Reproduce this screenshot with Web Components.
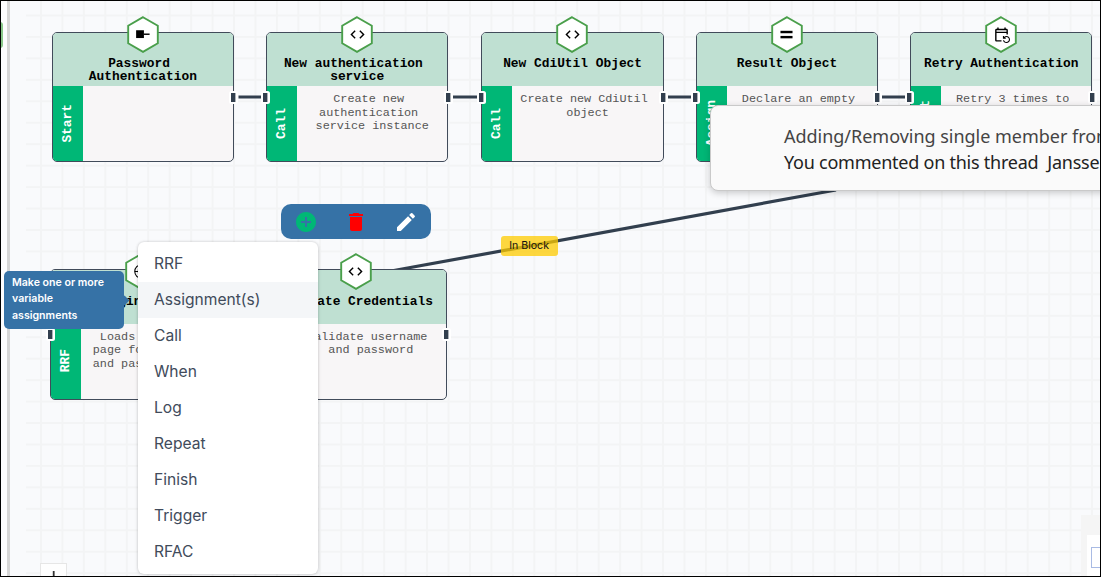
<!DOCTYPE html>
<html lang="en"><head><meta charset="utf-8"><title>Flow editor</title>
<style>
html,body{margin:0;height:100%;overflow:hidden}
body{font-family:Inter,"Liberation Sans",sans-serif}
</style></head><body>
<flow-editor></flow-editor>
<script>
const ICONS={
 start:'<rect x="3" y="6" width="11" height="11"/><rect x="14" y="10.6" width="8" height="2"/>',
 code:'<path d="M9.4 16.6 4.8 12l4.6-4.6L8 6l-6 6 6 6zm5.2 0 4.6-4.6-4.6-4.6L16 6l6 6-6 6z"/>',
 equal:'<rect x="3.5" y="6.8" width="17" height="3.4"/><rect x="3.5" y="14" width="17" height="3.4"/>',
 repeat:'<path fill-rule="evenodd" d="M21 12V6c0-1.1-.9-2-2-2h-1V2h-2v2H8V2H6v2H5c-1.11 0-1.99.9-1.99 2L3 20c0 1.1.89 2 2 2h7v-2H5V10h14v2zM19 8H5V6h14zm-3.36 12c.43 1.45 1.77 2.5 3.36 2.5 1.93 0 3.5-1.57 3.5-3.5s-1.57-3.5-3.5-3.5c-.95 0-1.82.38-2.45 1H18V18h-4v-4h1.5v1.43c.9-.88 2.14-1.43 3.5-1.43 2.76 0 5 2.24 5 5s-2.24 5-5 5c-2.42 0-4.44-1.72-4.9-4z"/>',
 web:'<g fill="none" stroke="#000" stroke-width="1.5"><circle cx="12" cy="12" r="9.5"/><ellipse cx="12" cy="12" rx="4.5" ry="9.5"/><path d="M2.5 12h19"/></g>',
 add:'<path d="M12 2C6.48 2 2 6.48 2 12s4.48 10 10 10 10-4.48 10-10S17.52 2 12 2m5 11h-4v4h-2v-4H7v-2h4V7h2v4h4z"/>',
 trash:'<path d="M6 19c0 1.1.9 2 2 2h8c1.1 0 2-.9 2-2V7H6zM19 4h-3.5l-1-1h-5l-1 1H5v2h14z"/>',
 edit:'<path d="M3 17.25V21h3.75L17.81 9.94l-3.75-3.75zM20.71 7.04c.39-.39.39-1.02 0-1.41l-2.34-2.34a.996.996 0 0 0-1.41 0l-1.83 1.83 3.75 3.75z"/>'
};
const define=(name,render)=>customElements.define(name,class extends HTMLElement{
 connectedCallback(){ if(!this.shadowRoot) this.attachShadow({mode:'open'}).innerHTML=render(this); }
});

define('flow-icon',el=>`<style>:host{display:block;width:var(--size,24px);height:var(--size,24px)}svg{display:block;width:100%;height:100%;fill:currentColor}</style><svg viewBox="0 0 24 24">${ICONS[el.getAttribute('name')]}</svg>`);

define('hex-badge',el=>`<style>:host{display:grid;width:32px;height:37px;place-items:center}
svg,flow-icon{grid-area:1/1}flow-icon{--size:17px;color:#000}</style>
<svg width="32" height="37"><path d="M16 1.2 30.8 9.8V27.2L16 35.8 1.2 27.2V9.8Z" fill="#fff" stroke="#4a9f4b" stroke-width="1.9"/></svg><flow-icon name="${el.getAttribute('icon')}"></flow-icon>`);

define('flow-port',()=>`<style>:host{display:block;width:9px;height:13px}svg{display:block}</style><svg width="9" height="13"><rect width="9" height="13" rx="2.5" fill="#fff"/><rect x="2" y="2" width="4.4" height="9" fill="#323f4e"/></svg>`);

define('flow-node',el=>`<style>
:host{display:block;width:182.4px;height:130.5px;font-family:"Liberation Mono",monospace}
.card{box-sizing:border-box;width:100%;height:100%;border:1px solid #414b5a;border-radius:5px;overflow:hidden;display:grid;grid-template:53.5px 1fr/30px 1fr;background:#f8f6f7}
header{grid-column:1/3;background:#bfe0d2;display:flex;flex-direction:column;align-items:center;padding-top:24.6px;box-sizing:border-box;font:bold 12.87px/13px "Liberation Mono",monospace;color:#000;white-space:pre}
.kind{background:#00b776;color:#fff;display:flex;align-items:center;justify-content:center;padding-bottom:1.5px;font:bold 12.87px/14px "Liberation Mono",monospace}
.kind span{writing-mode:vertical-rl;transform:rotate(180deg)}
.text{padding-top:6.7px;text-align:center;font-size:11.8px;line-height:13.7px;color:#555;white-space:pre}
hex-badge{position:absolute;top:-16px;left:75px}
flow-port{position:absolute;top:59px}
.in{left:-4.8px}.out{right:-4.2px}
</style><div class="card"><header><slot name="title"></slot></header><div class="kind"><span>${el.getAttribute('kind')}</span></div><div class="text"><slot></slot></div></div>
<hex-badge icon="${el.getAttribute('icon')}"></hex-badge>${el.hasAttribute('first')?'':'<flow-port class="in"></flow-port>'}<flow-port class="out"></flow-port>`);

define('action-bar',()=>`<style>:host{display:flex;width:150px;height:35px;align-items:center;justify-content:space-around;background:#3672a6;border-radius:10px}
.a{color:#00b776}.t{color:red}.e{color:#fff}</style><flow-icon class="a" name="add"></flow-icon><flow-icon class="t" name="trash"></flow-icon><flow-icon class="e" name="edit"></flow-icon>`);

define('menu-item',el=>`<style>:host{display:flex;align-items:center;height:36px;padding:0 16px;font:400 15.6px/24px Inter,sans-serif;color:#414b5b}:host([active]){background:#f4f6f8}</style><slot></slot>`);
define('add-menu',()=>`<style>:host{display:block;box-sizing:border-box;width:180px;height:332.5px;padding-top:4px;background:#fff;border-radius:6px;box-shadow:0 0 3px #0003,0 2px 5px #0001}</style><slot></slot>`);

define('hint-tip',()=>`<style>:host{display:block;box-sizing:border-box;width:120px;height:58px;padding:3.8px 8px;background:#3672a6;border-radius:5px;color:#fff;font:600 10.6px/16.5px Inter,sans-serif;white-space:pre}
i{position:absolute;right:-3.5px;top:25.5px;width:7px;height:7px;background:#3672a6;transform:rotate(45deg)}</style><slot></slot><i></i>`);

define('thread-toast',()=>`<style>:host{display:flex;flex-direction:column;box-sizing:border-box;width:420px;height:86px;padding:17px 0 0 73px;background:#fafafa;border:1px solid #c9c9c9;border-radius:8px;box-shadow:0 2px 7px #0003;font:400 18px/26px "Noto Sans",sans-serif;color:#222;white-space:pre}
::slotted(*){letter-spacing:-.24px}::slotted([slot=head]){color:#444;letter-spacing:-.02px}</style><slot name="head"></slot><slot></slot>`);

define('edge-label',()=>`<style>:host{display:flex;align-items:center;justify-content:center;width:57px;height:20px;border-radius:3px;background:#fecb00bf;color:#111;font:400 10.6px/20px Inter,sans-serif}</style><slot></slot>`);

define('zoom-controls',()=>`<style>:host{display:block;box-sizing:border-box;width:27px;height:27px;background:#fefefe;border:1px solid #e6e6e6}svg{display:block}</style><svg width="25" height="25"><path d="M12.7 7V19M6.5 13H18.5" stroke="#333" stroke-width="1.8"/></svg>`);
define('mini-map',()=>`<style>:host{display:block;width:100px;height:100px;background:#f5f5f5;padding:20px 0 0 6px;box-sizing:border-box}div{background:#fff;height:80px;padding:12px 0 0 4px;box-sizing:border-box}i{display:block;box-sizing:border-box;width:30px;height:21px;border:1px solid #a9bbe4}</style><div><i></i></div>`);

define('flow-editor',()=>`<style>
:host{display:block;position:relative;width:1101px;height:577px;overflow:hidden;background:#f9fafc}
.rail{display:flow-root;box-sizing:border-box;width:10px;height:577px;background:#fdfdfe;border-right:3px solid #d6d6d6}
.rail i{display:block;width:3px;height:26px;margin-top:22px;background:#8bc98b;border-radius:0 3px 3px 0}
.grid,.edges{position:absolute;inset:0}
.frame{position:absolute;inset:0;border:1px solid #000}
.at{position:absolute;left:var(--x);top:var(--y)}
</style>
<div class="rail"><i></i></div>
<svg class="grid" width="1101" height="577"><defs><pattern id="g" x="40" y="14.5" width="21.45" height="21.45" patternUnits="userSpaceOnUse"><path d="M0 1H21.45M1 0V21.45" fill="none" stroke="#f3f4f5" stroke-width="1.9"/></pattern></defs><rect x="26" width="1075" height="577" fill="url(#g)"/></svg>
<svg class="edges" width="1101" height="577"><path d="M238.5 97.1H262M453 97.1H477M668 97.1H692M882 97.1H906" stroke="#323f4e" stroke-width="3"/><path d="M376 273.8 836 190" stroke="#323f4e" stroke-width="3.2"/></svg>
<flow-node class="at" style="--x:51.7px;--y:31.8px" kind="Start" icon="start" first><span slot="title">Password </span><span slot="title">Authentication</span></flow-node>
<flow-node class="at" style="--x:266px;--y:31.8px" kind="Call" icon="code"><span slot="title">New authentication </span><span slot="title">service</span>Create new 
authentication 
service instance</flow-node>
<flow-node class="at" style="--x:481.4px;--y:31.8px" kind="Call" icon="code"><span slot="title">New CdiUtil Object</span>Create new CdiUtil 
object</flow-node>
<flow-node class="at" style="--x:695.8px;--y:31.8px" kind="Assign" icon="equal"><span slot="title">Result Object</span>Declare an empty 
object</flow-node>
<flow-node class="at" style="--x:910px;--y:31.8px" kind="Repeat" icon="repeat"><span slot="title">Retry Authentication</span>Retry 3 times to 
authenticate</flow-node>
<flow-node class="at" style="--x:50.3px;--y:269.4px" kind="RRF" icon="web"><span slot="title">Login Page</span>Loads login html
page for username 
and password input</flow-node>
<flow-node class="at" style="--x:264.6px;--y:269.4px" kind="Call" icon="code"><span slot="title">Validate Credentials</span>Validate username 
and password</flow-node>
<edge-label class="at" style="--x:500.6px;--y:235.6px">In Block</edge-label>
<zoom-controls class="at" style="--x:40.4px;--y:563px"></zoom-controls>
<mini-map class="at" style="--x:1081px;--y:515px"></mini-map>
<action-bar class="at" style="--x:280.7px;--y:204.4px"></action-bar>
<hint-tip class="at" style="--x:4px;--y:271px">Make one or more
variable
assignments</hint-tip>
<add-menu class="at" style="--x:138px;--y:241.6px"><menu-item>RRF</menu-item><menu-item active>Assignment(s)</menu-item><menu-item>Call</menu-item><menu-item>When</menu-item><menu-item>Log</menu-item><menu-item>Repeat</menu-item><menu-item>Finish</menu-item><menu-item>Trigger</menu-item><menu-item>RFAC</menu-item></add-menu>
<thread-toast class="at" style="--x:710px;--y:105px"><span slot="head">Adding/Removing single member from</span><span>You commented on this thread  Janssen</span></thread-toast>
<div class="frame"></div>`);
</script></body></html>
